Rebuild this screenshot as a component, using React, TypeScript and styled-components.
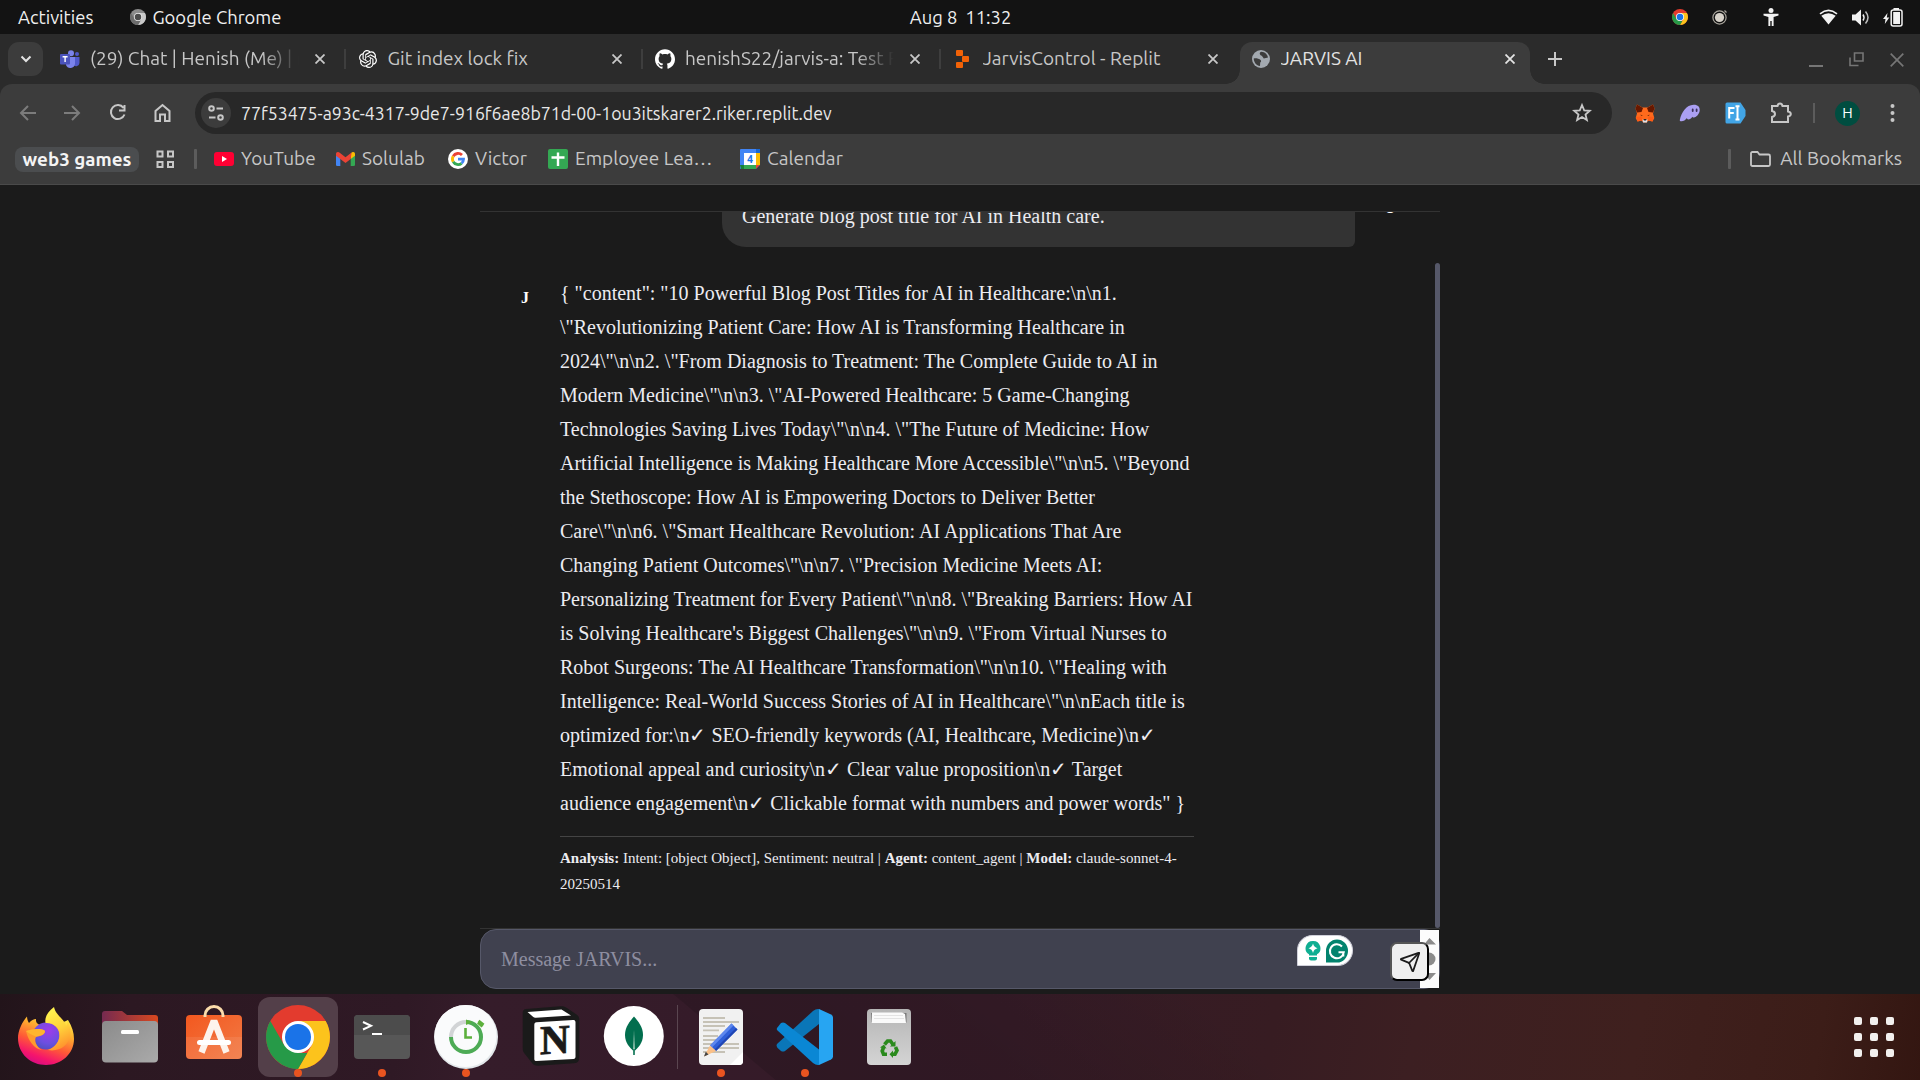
import React from 'react';
import styled, { createGlobalStyle, css } from 'styled-components';
import { SiGithub, SiOpenai } from 'react-icons/si';
import { Send } from 'lucide-react';

const GlobalStyle = createGlobalStyle`
  *, *::before, *::after { box-sizing: border-box; }
  html, body, #root { height: 100%; }
  body { margin: 0; background: #1b1b1b; overflow: hidden; }
`;

const Screen = styled.div`
  display: flex;
  flex-direction: column;
  width: 1920px;
  height: 1080px;
  overflow: hidden;
  font-family: 'Ubuntu', 'Noto Sans', 'Open Sans', sans-serif;
`;

const Label = styled.span<{ $size?: number; $color?: string; $bold?: boolean }>`
  font-size: ${p => p.$size ?? 19}px;
  line-height: 24px;
  color: ${p => p.$color ?? '#c7c7c7'};
  font-weight: ${p => (p.$bold ? 700 : 400)};
  white-space: pre;
`;

/* ---------- system bar ---------- */

const SystemBar = styled.header`
  flex: none;
  display: grid;
  grid-template-columns: 1fr auto 1fr;
  align-items: center;
  height: 34px;
  padding: 0 17px 0 18px;
  background: #131313;
`;

const SystemLabel = styled(Label).attrs({ $size: 18.4, $color: '#f0f0f0' })``;

const SystemLeft = styled.div`
  display: flex;
  align-items: center;
  gap: 37px;
`;

const AppName = styled.div`
  display: flex;
  align-items: center;
  gap: 6px;
`;

const Clock = styled.div`
  display: flex;
  gap: 8px;
`;

const Tray = styled.div`
  display: flex;
  justify-content: flex-end;
  align-items: center;
`;

const TrayItem = styled.div<{ $gap?: number }>`
  display: flex;
  margin-left: ${p => p.$gap ?? 0}px;
`;

/* ---------- tab strip ---------- */

const TabStrip = styled.nav`
  flex: none;
  display: flex;
  align-items: flex-end;
  height: 50px;
  padding-left: 8px;
  background: #2b2b2b;
`;

const TabSearch = styled.button`
  display: grid;
  place-items: center;
  width: 35px;
  height: 34px;
  margin: 0 6px 8px 0;
  padding: 0;
  border: 0;
  border-radius: 11px;
  background: #3c3c3c;
`;

const Tab = styled.div<{ $width: number; $active?: boolean; $divider?: boolean }>`
  position: relative;
  flex: none;
  display: flex;
  align-items: center;
  width: ${p => p.$width}px;
  height: 42px;
  padding: 0 ${p => (p.$active ? 15 : 22)}px 8px 11px;
  border-radius: 12px 12px 0 0;
  ${p =>
    p.$active &&
    css`
      background: #3c3c3c;
      &::before,
      &::after {
        content: '';
        position: absolute;
        bottom: 0;
        width: 14px;
        height: 14px;
      }
      &::before {
        left: -14px;
        background: radial-gradient(circle at 0 0, transparent 13.5px, #3c3c3c 14px);
      }
      &::after {
        right: -14px;
        background: radial-gradient(circle at 100% 0, transparent 13.5px, #3c3c3c 14px);
      }
    `}
  ${p =>
    p.$divider &&
    css`
      &::after {
        content: '';
        position: absolute;
        right: 1px;
        top: 7px;
        width: 2px;
        height: 20px;
        background: #3e3e3e;
      }
    `}
`;

const TabIcon = styled.span`
  flex: none;
  display: grid;
  place-items: center;
  width: 20px;
  height: 20px;
  margin-right: 10px;
`;

const TabTitle = styled.span<{ $fade?: boolean }>`
  flex: 1;
  min-width: 0;
  margin-right: 16px;
  padding-bottom: 2px;
  overflow: hidden;
  white-space: nowrap;
  ${p => p.$fade && css`mask-image: linear-gradient(90deg, #000 82%, transparent 100%);`}
`;

const NewTab = styled.div`
  display: flex;
  margin: 0 0 18px 18px;
`;

const WindowButtons = styled.div`
  display: flex;
  align-items: center;
  gap: 26px;
  margin: 0 16px 17px auto;
`;

/* ---------- toolbar ---------- */

const ChromeBody = styled.div`
  flex: none;
  height: 101px;
  background: #2b2b2b;
`;

const ChromePanel = styled.div`
  height: 101px;
  border-radius: 12px 12px 0 0;
  border-bottom: 1px solid #4a4a4a;
  background: #3c3c3c;
`;

const Toolbar = styled.div`
  display: flex;
  align-items: center;
  height: 58px;
  padding: 0 12px 0 16px;
`;

const NavButtons = styled.div`
  display: flex;
  align-items: center;
  gap: 21px;
  width: 179px;
`;

const Omnibox = styled.div`
  flex: none;
  display: flex;
  align-items: center;
  width: 1417px;
  height: 42px;
  padding: 0 19px 0 6px;
  border-radius: 21px;
  background: #282828;
`;

const SiteInfo = styled.span`
  display: grid;
  place-items: center;
  width: 30px;
  height: 30px;
  margin-right: 10px;
  border-radius: 50%;
  background: #3c3c3c;
`;

const Url = styled.div`
  flex: 1;
  padding-top: 2px;
`;

const Extensions = styled.div`
  display: flex;
  align-items: center;
  gap: 24px;
  margin-left: 23px;
`;

const ToolDivider = styled.span`
  width: 2px;
  height: 20px;
  margin: 0 -4px 0 -5px;
  background: #5c5c5c;
`;

const Avatar = styled.span`
  display: grid;
  place-items: center;
  width: 25px;
  height: 25px;
  margin-right: 6px;
  border-radius: 50%;
  background: #004d40;
`;

/* ---------- bookmarks ---------- */

const Bookmarks = styled.div`
  display: flex;
  align-items: center;
  height: 34px;
  padding: 0 18px 0 15px;
`;

const BookmarkLabel = styled(Label)`
  padding-bottom: 2px;
`;

const Chip = styled.div`
  display: grid;
  place-items: center;
  width: 124px;
  height: 25px;
  margin-right: 17px;
  border-radius: 8px;
  background: #4b4d4f;
`;

const Bookmark = styled.div<{ $width: number }>`
  display: flex;
  align-items: center;
  gap: 7px;
  width: ${p => p.$width}px;
`;

const AllBookmarks = styled.div`
  display: flex;
  align-items: center;
  gap: 9px;
`;

const BarDivider = styled.span<{ $push?: boolean }>`
  width: 3px;
  height: 20px;
  margin-right: ${p => (p.$push ? 19 : 17)}px;
  margin-left: ${p => (p.$push ? 'auto' : '19px')};
  border-radius: 1px;
  background: #5c5c5c;
`;

/* ---------- page ---------- */

const Page = styled.main`
  flex: 1;
  min-height: 0;
  display: flex;
  flex-direction: column;
  width: 960px;
  margin: 0 auto;
  padding: 26px 0 5px;
  color: #ececf1;
  font-family: 'Liberation Serif', 'Times New Roman', serif;
  font-size: 20px;
  line-height: 34px;
`;

const Messages = styled.section`
  position: relative;
  height: 717px;
  overflow: hidden;
  border-top: 1px solid #333;
`;

const Scrollbar = styled.div`
  position: absolute;
  top: 51px;
  right: 0;
  width: 5px;
  height: 665px;
  border-radius: 3px;
  background: #565869;
`;

const Row = styled.article<{ $user?: boolean }>`
  display: flex;
  flex-direction: ${p => (p.$user ? 'row-reverse' : 'row')};
  gap: 17px;
  margin-top: ${p => (p.$user ? -27 : 29)}px;
  padding: 0 ${p => (p.$user ? 32 : 27)}px;
`;

const Initial = styled.div<{ $user?: boolean }>`
  flex: none;
  width: 36px;
  height: 40px;
  padding-top: ${p => (p.$user ? 6 : 4.5)}px;
  color: #fff;
  font-size: 16px;
  font-weight: 700;
  line-height: 34px;
  text-align: center;
`;

const Bubble = styled.div`
  width: 633px;
  padding: 14px 20px;
  border-radius: 24px 24px 6px 24px;
  background: #333;
`;

const Reply = styled.div`
  width: 634px;
`;

const ReplyLine = styled.div`
  height: 34px;
  white-space: nowrap;
`;

const Analysis = styled.div`
  margin-top: 16px;
  padding-top: 9px;
  border-top: 1px solid #444;
  font-size: 15px;
  line-height: 25.5px;
`;

const Composer = styled.form`
  position: relative;
  display: flex;
  height: 61px;
  border-top: 1px solid #333;
`;

const Field = styled.div`
  flex: 1;
  padding: 12px 20px;
  border: 1px solid #565869;
  border-radius: 16px;
  background: #40414f;
  color: #8e8ea0;
`;

const FieldScroll = styled.div`
  position: absolute;
  top: 1px;
  right: 1px;
  width: 19px;
  height: 58px;
  background: #fcfcfc;
`;

const SendButton = styled.button`
  position: absolute;
  right: 11px;
  top: 13px;
  display: grid;
  place-items: center;
  width: 39px;
  height: 39px;
  padding: 0;
  border: 2px solid;
  border-color: #555 #000 #000 #555;
  border-radius: 7px;
  background: #efefef;
`;

const Grammarly = styled.div`
  position: absolute;
  left: 817px;
  top: 6px;
  display: flex;
  align-items: center;
  gap: 5px;
  width: 56px;
  height: 31px;
  padding-left: 7px;
  border: 1px solid #d0d0da;
  border-radius: 16px 16px 16px 1px;
  background: #fff;
`;

/* ---------- dock ---------- */

const DockBar = styled.footer`
  flex: none;
  display: flex;
  height: 86px;
  padding: 0 26px 0 4px;
  background:
    linear-gradient(40deg, transparent 498px, rgba(0, 0, 0, 0.13) 499px, rgba(0, 0, 0, 0.1) 650px, transparent 840px),
    linear-gradient(100deg, #22141a 0, #2c1822 130px, #2f1925 400px, #351c2a 480px, #351b29 700px, #351b27 1000px, #371c22 1260px, #3c1f22 1400px, #3f201e 1620px, #3c1d18 1800px, #321510 1920px);
`;

const DockSlot = styled.div<{ $current?: boolean; $running?: boolean }>`
  position: relative;
  display: grid;
  place-items: center;
  width: 84px;
  height: 86px;
  ${p =>
    p.$current &&
    css`
      &::before {
        content: '';
        position: absolute;
        inset: 3px 2px;
        border-radius: 12px;
        background: #533f49;
      }
      svg { position: relative; }
    `}
  ${p =>
    p.$running &&
    css`
      &::after {
        content: '';
        position: absolute;
        left: 38px;
        bottom: 3px;
        width: 8px;
        height: 8px;
        border-radius: 50%;
        background: #e95420;
      }
    `}
`;

const DockDivider = styled.span`
  width: 1px;
  height: 64px;
  margin: 11px 1px 0;
  background: #5a4650;
`;

const AppGrid = styled.div`
  display: grid;
  grid-template-columns: repeat(3, 8px);
  gap: 8px;
  align-content: center;
  margin-left: auto;
`;

const GridDot = styled.i`
  width: 8px;
  height: 8px;
  border-radius: 2px;
  background: #f2f0ee;
`;

/* ---------- icons ---------- */

const Stroke = styled.svg`
  flex: none;
  display: block;
  fill: none;
  stroke: #c7c7c7;
  stroke-width: 2;
`;

const ChromeLogo = ({ size, gray }: { size: number; gray?: boolean }) => {
  const c = gray ? ['#8b8b8b', '#c9c9c9', '#6d6d6d', '#efefef', '#4c4c4c'] : ['#e33b2e', '#fcc31c', '#269a48', '#fff', '#1a73e8'];
  return (
    <svg width={size} height={size} viewBox="0 0 64 64">
      <circle cx="32" cy="32" r="32" fill={c[0]} />
      <path d="M32 16H59.7A32 32 0 0 1 32 64L45.9 40Z" fill={c[1]} />
      <path d="M4.3 16L18.1 40L32 48H41.2L32 64A32 32 0 0 1 4.3 16Z" fill={c[2]} />
      <circle cx="32" cy="32" r="16" fill={c[3]} />
      <circle cx="32" cy="32" r="13" fill={c[4]} />
    </svg>
  );
};

const RecorderIcon = () => (
  <svg width="16" height="16" viewBox="0 0 16 16" fill="none" stroke="#a9a59c" strokeWidth="1.2">
    <circle cx="7.5" cy="8.5" r="6.6" />
    <circle cx="7.5" cy="8.5" r="4.6" fill="#d6d1c8" stroke="none" />
    <path d="M12.5 1.5l2 2" />
  </svg>
);

const AccessIcon = () => (
  <svg width="16" height="18" viewBox="0 0 16 18" fill="#f2f2f2">
    <circle cx="8" cy="2.6" r="2.5" />
    <path d="M.5 5.8h15v1.6L10.6 9v9H8.7v-5H7.3v5H5.4V9L.5 7.4z" />
  </svg>
);

const WifiIcon = () => (
  <svg width="19" height="16" viewBox="0 0 19 16">
    <path d="M1 4.8Q9.5 -2 18 4.8" fill="none" stroke="#f2f2f2" strokeWidth="1.7" />
    <path d="M2.3 6.8Q9.5 1.5 16.7 6.8L9.5 15.5Z" fill="#f2f2f2" />
  </svg>
);

const VolumeIcon = () => (
  <svg width="18" height="17" viewBox="0 0 18 17" fill="none" stroke="#f2f2f2" strokeWidth="1.5">
    <path d="M0 5.5H3.5L9 .5V16.5L3.5 11.5H0Z" fill="#f2f2f2" stroke="none" />
    <path d="M11 5.5Q13 8.5 11 11.5" />
    <path d="M13.5 2.5Q18.5 8.5 13.5 14.5" stroke="#bbb" />
  </svg>
);

const BatteryIcon = () => (
  <svg width="20" height="19" viewBox="0 0 20 19">
    <path d="M4.5 5L0 11H2.5L1.8 16L6.3 9.5H3.8Z" fill="#f2f2f2" />
    <path d="M10.5 0h5.5v2h-5.5z" fill="#f2f2f2" />
    <rect x="8.2" y="2" width="10.8" height="16" rx="2" fill="none" stroke="#f2f2f2" strokeWidth="1.5" />
    <rect x="10.2" y="4" width="6.8" height="12" fill="#f2f2f2" />
  </svg>
);

const TeamsIcon = () => (
  <svg width="20" height="19" viewBox="0 0 20 19">
    <circle cx="11" cy="3.3" r="3" fill="#7b83eb" />
    <circle cx="17" cy="4" r="2" fill="#5059c9" />
    <path d="M13 7h6.5v6a3.5 3.5 0 0 1-6.5 1.5z" fill="#5059c9" />
    <path d="M6 7h9v7a4.7 4.7 0 0 1-9 1z" fill="#7b83eb" />
    <rect x="0" y="4" width="10" height="10.5" rx="1" fill="#4b53bc" />
    <path d="M2.6 6.8h5M5.1 6.8v5.2" stroke="#fff" strokeWidth="1.4" />
  </svg>
);

const ReplitIcon = () => (
  <svg width="14" height="18" viewBox="0 0 14 18" fill="#f26207">
    <rect x="0" y="0" width="7" height="6" rx="1" />
    <rect x="6" y="6" width="7" height="6" rx="1" />
    <rect x="0" y="12" width="7" height="6" rx="1" />
  </svg>
);

const GlobeIcon = () => (
  <svg width="18" height="18" viewBox="0 0 18 18">
    <circle cx="9" cy="9" r="9" fill="#a3a9b0" />
    <path d="M9.5 1.8C6.8 2.5 7.5 5 9.8 5.8L11.8 8.6L16 7.6C15.6 4.5 12.8 1.9 9.5 1.8ZM1.7 8.5C5 8 6.5 9 8 9.5C9.5 10.3 9.3 12 8.2 12.5L8 16C4.5 15.7 1.9 12.6 1.7 8.5Z" fill="#3c3c3c" />
  </svg>
);

const CloseIcon = ({ size = 10, color = '#c7c7c7', width = 1.8 }: { size?: number; color?: string; width?: number }) => (
  <svg width={size} height={size} viewBox="0 0 10 10" stroke={color} strokeWidth={width}>
    <path d="M.5.5l9 9M9.5.5l-9 9" />
  </svg>
);

const FoxIcon = () => (
  <svg width="20" height="19" viewBox="0 0 20 19">
    <path d="M2 .5L7.500 3.500H12.500L18 .5L19.500 4.500L18 9.500L19.300 14L17.500 17.500L13.500 16.500L11.500 18.500H8.500L6.500 16.500L2.500 17.500L.7 14L2 9.500L.5 4.500Z" fill="#ff6a1c" />
    <path d="M2 .5L8 4L6.500 8L2 8.500L.5 4.500ZM18 .5L12 4L13.500 8L18 8.500L19.500 4.500Z" fill="#661800" />
    <path d="M1 13L6.500 12.500L7 16.500L2.500 17.500ZM19 13L13.500 12.500L13 16.500L17.500 17.500Z" fill="#ff5c16" />
    <path d="M5.500 10.500l2.500 1.200H6zM14.500 10.500l-2.500 1.200h2z" fill="#5a2308" />
    <path d="M7.500 15.500h5L12 18.500H8z" fill="#dfe3ea" />
    <path d="M8.500 15h3l-.4 1.500H8.900z" fill="#34221d" />
  </svg>
);

const GhostIcon = () => (
  <svg width="22" height="18" viewBox="0 0 22 18">
    <path d="M.8 16C2.5 8 7.5 1 14.5 .8C19 .7 21 3 20.7 6.5C20.4 10 17.5 13 15 13.5C14 13.7 13.5 13 13.3 12.7C12.3 14.5 10.8 15.5 9.5 15.5C8.3 15.5 8 14.5 8 14C6.5 16 4.5 17.3 2.5 17.3C1.2 17.3.6 16.8.8 16Z" fill="#ab9ff2" />
    <path d="M13.7 5.5v1.6M17.6 5.5v1.6" stroke="#3c315b" strokeWidth="1.8" strokeLinecap="round" />
  </svg>
);

const FontExtIcon = () => (
  <svg width="21" height="22" viewBox="0 0 21 22">
    <path d="M2 .5H15.5L20.5 8V14L15.5 21.5H2A1.5 1.5 0 0 1 .5 20V2A1.5 1.5 0 0 1 2 .5Z" fill="#42a5e6" />
    <path d="M4.2 16.5V6H9.5M4.2 11H8.8M12.5 4.5V17.5M10.5 4.2H14.5M10.5 17.5H14.5" fill="none" stroke="#fff" strokeWidth="2" />
  </svg>
);

const GmailIcon = () => (
  <svg width="19" height="14" viewBox="0 0 19 14">
    <path d="M0 2V12.7A1.3 1.3 0 0 0 1.3 14H4.3V5.5Z" fill="#4285f4" />
    <path d="M19 2V12.7A1.3 1.3 0 0 1 17.7 14H14.7V5.5Z" fill="#34a853" />
    <path d="M14.7 2V7L19 3.7V2C19 0 16.8-.6 15.6.6Z" fill="#fbbc04" />
    <path d="M0 2C0 0 2.2-.6 3.4.6L9.5 5.2L15.6.6L14.7 7L9.5 10.9L4.3 7L0 3.7Z" fill="#ea4335" />
  </svg>
);

const GoogleIcon = () => (
  <svg width="20" height="20" viewBox="0 0 20 20" fill="none" strokeWidth="2.8">
    <circle cx="10" cy="10" r="10" fill="#fff" />
    <path d="M5.2 7.2A5.6 5.6 0 0 1 14 6.1" stroke="#ea4335" />
    <path d="M5.2 12.8A5.6 5.6 0 0 1 5.2 7.2" stroke="#fbbc04" />
    <path d="M13.6 14.3A5.6 5.6 0 0 1 5.2 12.8" stroke="#34a853" />
    <path d="M10 10.2H15.5A5.6 5.6 0 0 1 13.6 14.3" stroke="#4285f4" />
  </svg>
);

const CalendarIcon = () => (
  <svg width="20" height="20" viewBox="0 0 20 20">
    <rect width="20" height="20" rx="1" fill="#4285f4" />
    <path d="M16 4h4v12h-4z" fill="#fbbc04" />
    <path d="M4 16h12v4H4z" fill="#34a853" />
    <path d="M0 16h4v4H1z" fill="#188038" />
    <path d="M16 0h4v4h-4z" fill="#1967d2" />
    <path d="M16 16h4l-4 4z" fill="#ea4335" />
    <path d="M20 16v4h-4z" fill="#3c3c3c" />
    <rect x="4" y="4" width="12" height="12" fill="#fff" />
    <text x="10" y="14" fontSize="10.5" fontWeight="700" fontFamily="Roboto, sans-serif" textAnchor="middle" fill="#1a73e8">4</text>
  </svg>
);

const BulbMark = () => (
  <svg width="16" height="22" viewBox="0 0 16 22">
    <path d="M8 1A7.2 7.2 0 0 1 12 14.3V15.5H4V14.3A7.2 7.2 0 0 1 8 1Z" fill="#0fae92" />
    <path d="M4 17h8v1.5a2 2 0 0 1-2 2H6a2 2 0 0 1-2-2z" fill="#0fae92" />
    <path d="M8 3.5Q8.9 7.3 12.5 8.2Q8.9 9.1 8 12.9Q7.1 9.1 3.5 8.2Q7.1 7.3 8 3.5Z" fill="#fff" />
  </svg>
);

const GrammarlyMark = () => (
  <svg width="22" height="24" viewBox="0 0 22 24">
    <path d="M11 .5A11 11.500 0 1 1 11 23.500H0V12A11 11.500 0 0 1 11 .5Z" fill="#02836e" />
    <path d="M16 7.500A7 7 0 1 0 17.800 13.200H12.500M17.300 12.500V17.500" fill="none" stroke="#fff" strokeWidth="2" />
  </svg>
);

const Art = styled.svg.attrs({ viewBox: '0 0 64 64' })`
  width: 64px;
  height: 64px;
  overflow: visible;
`;

const Firefox = () => (
  <Art>
    <defs>
      <linearGradient id="ffBody" x1="0.8" y1="0" x2="0.35" y2="1">
        <stop offset="0" stopColor="#fff44f" />
        <stop offset=".3" stopColor="#ffb02e" />
        <stop offset=".6" stopColor="#ff5a36" />
        <stop offset=".85" stopColor="#f5156c" />
        <stop offset="1" stopColor="#d80c82" />
      </linearGradient>
      <radialGradient id="ffGlobe" cx=".6" cy=".3" r=".8">
        <stop offset="0" stopColor="#a03bea" />
        <stop offset=".6" stopColor="#6b4fe0" />
        <stop offset="1" stopColor="#4a4fb8" />
      </radialGradient>
      <linearGradient id="ffFlame" x1=".4" y1="0" x2=".7" y2="1">
        <stop offset="0" stopColor="#fff44f" />
        <stop offset=".5" stopColor="#ffd23a" />
        <stop offset="1" stopColor="#ff8a2c" />
      </linearGradient>
    </defs>
    <path d="M13 11.5C13 14 14 16.5 15 18C17 15.5 20 14 22 14C21.5 17 23 19 26 20C34 15 46 20 54 15C58 21 60 28 60 34C60 49 47 60 32 60C17 60 4 49 4 33C4 26 8 17 13 11.5Z" fill="url(#ffBody)" />
    <circle cx="32" cy="31" r="13.5" fill="url(#ffGlobe)" />
    <path d="M40 2C33 7 30.500 13 31.500 18C39 17.500 45 22 45.500 28C46 35 42 42 34 45C45 47 54 41 56 31C57.500 24 55 18 53 15C54 18 53 20 52 21C50 13 42 11 40 2Z" fill="url(#ffFlame)" />
    <path d="M12 26C18 24 28 23 31 26C31 30 26 31 22 32C20 35 22 42 28 45C20 44 14 35 12 26Z" fill="#ff9a2e" />
    <path d="M12 26C18 24 28 23 31 26C31 29.5 26 31 22 31.5C18 30 14 28 12 26Z" fill="#ffb52f" />
  </Art>
);

const Files = () => (
  <Art>
    <defs>
      <linearGradient id="flBack"><stop stopColor="#752a50" /><stop offset="1" stopColor="#d9481f" /></linearGradient>
      <linearGradient id="flFront" x2="1" y2="1"><stop stopColor="#8b8b8b" /><stop offset="1" stopColor="#aaa" /></linearGradient>
    </defs>
    <path d="M4 9a3 3 0 0 1 3-3H24L29 10H57a3 3 0 0 1 3 3V30H4Z" fill="url(#flBack)" />
    <rect x="4" y="16" width="56" height="41.5" rx="4" fill="url(#flFront)" />
    <rect x="23" y="25" width="18" height="4" rx="1.5" fill="#fff" />
  </Art>
);

const Software = () => (
  <Art>
    <defs><linearGradient id="swBag" x2="1" y2="1"><stop stopColor="#f3581f" /><stop offset="1" stopColor="#f17a45" /></linearGradient></defs>
    <rect x="4" y="10" width="56" height="44" rx="4" fill="url(#swBag)" />
    <path d="M4 32h56v18a4 4 0 0 1-4 4H8a4 4 0 0 1-4-4z" fill="#fff" opacity=".08" />
    <path d="M23 12V10.5A9 9 0 0 1 41 10.5V12" fill="none" stroke="#fbdcab" strokeWidth="3" />
    <path d="M19.5 47.5L31 18H33L44.5 47.5" fill="none" stroke="#fdf3ec" strokeWidth="6.5" />
    <rect x="15" y="35" width="34" height="5" rx="2.5" fill="#fff" />
  </Art>
);

const Terminal = () => (
  <Art>
    <rect x="4" y="10" width="56" height="44" rx="4" fill="#575757" />
    <path d="M4 30V14a4 4 0 0 1 4-4H56a4 4 0 0 1 4 4V30Z" fill="#4c4c4c" />
    <path d="M13 17L21 20.8L13 24.5M22 29H32" fill="none" stroke="#fff" strokeWidth="2" />
  </Art>
);

const Timer = () => (
  <Art>
    <circle cx="32" cy="32" r="32" fill="#e3e8eb" />
    <circle cx="31.5" cy="31" r="31" fill="#fafbfc" />
    <path d="M32 17A15 15 0 0 0 17 32" fill="none" stroke="#d2d4d6" strokeWidth="4" />
    <path d="M17 32A15 15 0 1 0 32 17" fill="none" stroke="#4dab55" strokeWidth="4" />
    <path d="M32 14.5L38 17L32 20Z" fill="#5cb03c" />
    <path d="M44 17.5L48.5 21.5M44.5 16L49.5 20" stroke="#5cb03c" strokeWidth="3" />
    <path d="M31.5 23V32.5H38" fill="none" stroke="#5cb03c" strokeWidth="2.6" />
  </Art>
);

const Notion = () => (
  <Art>
    <path d="M8 4L42 1.2C45 1 47 1.5 49 3L58.5 9.5C60.5 11 61.3 12 61.3 14.5V52C61.3 56 60 58 56 58.3L20 60.7C17 60.8 15.5 60 14 58L6.5 48.5C5 46.5 4.7 45.5 4.7 43V8C4.7 5.5 5.8 4.2 8 4Z" fill="#1a1a1a" />
    <path d="M9.5 7L43.5 4.5L53 10.5L18 12.8C16.5 12.8 16 12.5 15 11.7Z" fill="#fff" />
    <path d="M18.5 17.3L55 15C56.5 15 57.5 15.6 57.5 17.3V51.5C57.5 53 56.8 53.8 55.5 53.9L18.5 56C17 56 16.3 55.4 16.3 54V20C16.3 18.3 17 17.4 18.5 17.3Z" fill="#fff" />
    <text x="36.8" y="49.5" fontSize="41" fontWeight="700" fontFamily="'Liberation Serif', serif" textAnchor="middle" stroke="#1a1a1a" strokeWidth=".8" transform="skewY(-3) translate(0 1)" fill="#1a1a1a">N</text>
  </Art>
);

const Mongo = () => (
  <Art>
    <circle cx="31.8" cy="31" r="30" fill="#fff" />
    <path d="M32 11.5C36 16 41 22 41 30C41 38 36 43 32 46.5C28 43 23 38 23 30C23 22 28 16 32 11.5Z" fill="#026e4e" />
    <path d="M32 25L33 44L32.5 50H31.5L31 44Z" fill="#8fc0ac" />
    <path d="M31.3 44h1.4v6h-1.4z" fill="#026e4e" />
  </Art>
);

const TextEditor = () => (
  <Art>
    <rect x="10" y="4" width="44" height="56" rx="4" fill="#f1f1f1" />
    <path d="M54 47V56a4 4 0 0 1-4 4H41Z" fill="#fff" />
    <path d="M14 13H36M14 17H50M14 21H36M14 25.3H30M14 31H29M14 35H30M14 39H50M14 43H50M14 47H36" stroke="#c6c2b6" strokeWidth="1.8" />
    <path d="M21 40.5L42.5 18.5L48.5 24.5L27 46Z" fill="#2f5fd8" />
    <path d="M21 40.5L42.5 18.5L44.5 20.5L23 42.5Z" fill="#5d87ee" />
    <path d="M25.5 44.5L47 23L48.5 24.5L27 46Z" fill="#2046b4" />
    <path d="M21 40.5L27 46L15 51.5Z" fill="#fbc088" />
    <path d="M16.8 46.8L19.5 49.4L15 51.5Z" fill="#444" />
  </Art>
);

const VsCode = () => (
  <Art>
    <path d="M4 39L40 6Q43 3.5 46 4V19L12 46Q10 47.2 8 46L4.6 43Q3 41 4 39Z" fill="#0a76b8" />
    <path d="M4 23L8 18Q10 17 12 18L46 44.5V60Q43 60.5 40 58L4 25Q3.5 24 4 23Z" fill="#0a87d4" />
    <path d="M46 4L58 9.5Q60 10.5 60 12.5V51.5Q60 53.5 58 54.5L46 60Z" fill="#27a5f2" />
  </Art>
);

const Trash = () => (
  <Art>
    <defs><linearGradient id="trBody" x2="0" y2="1"><stop stopColor="#b5b5b5" /><stop offset="1" stopColor="#d4d4d4" /></linearGradient></defs>
    <rect x="10" y="4" width="44" height="56" rx="4" fill="url(#trBody)" />
    <path d="M14 8H49.5V17.5H14Z" fill="#777" />
    <path d="M15 7.5H45L48 9L49 18H14.5Z" fill="#fafafa" />
    <path d="M17 10.5H46M17 13.5H47" stroke="#ddd" strokeWidth=".8" />
    <g fill="none" stroke="#2a8a1d" strokeWidth="3.6">
      <path d="M27.5 39.5L30.5 36H33.5L36 39.5" />
      <path d="M38.5 42L40 45.5L38 49.2H35" />
      <path d="M30 49.2H26.5L25.2 46L26.5 42.5" />
    </g>
    <path d="M38.5 36V41.5H33ZM36 45.5V53L32.5 49.3ZM23 42.5L27 39.5L29.5 43.5Z" fill="#2a8a1d" />
  </Art>
);

/* ---------- data ---------- */

const tabs = [
  { title: '(29) Chat | Henish (Me) | M', width: 297.5, icon: <TeamsIcon />, fade: true, divider: true },
  { title: 'Git index lock fix', width: 297.5, icon: <SiOpenai size={18} color="#fff" />, divider: true },
  { title: 'henishS22/jarvis-a: Test F', width: 297.5, icon: <SiGithub size={20} color="#fff" />, fade: true, divider: true },
  { title: 'JarvisControl - Replit', width: 298, icon: <ReplitIcon /> },
  { title: 'JARVIS AI', width: 290.5, icon: <GlobeIcon />, active: true },
];

const replyLines = [
  '{ "content": "10 Powerful Blog Post Titles for AI in Healthcare:\\n\\n1.',
  '\\"Revolutionizing Patient Care: How AI is Transforming Healthcare in',
  '2024\\"\\n\\n2. \\"From Diagnosis to Treatment: The Complete Guide to AI in',
  'Modern Medicine\\"\\n\\n3. \\"AI-Powered Healthcare: 5 Game-Changing',
  'Technologies Saving Lives Today\\"\\n\\n4. \\"The Future of Medicine: How',
  'Artificial Intelligence is Making Healthcare More Accessible\\"\\n\\n5. \\"Beyond',
  'the Stethoscope: How AI is Empowering Doctors to Deliver Better',
  'Care\\"\\n\\n6. \\"Smart Healthcare Revolution: AI Applications That Are',
  'Changing Patient Outcomes\\"\\n\\n7. \\"Precision Medicine Meets AI:',
  'Personalizing Treatment for Every Patient\\"\\n\\n8. \\"Breaking Barriers: How AI',
  "is Solving Healthcare's Biggest Challenges\\\"\\n\\n9. \\\"From Virtual Nurses to",
  'Robot Surgeons: The AI Healthcare Transformation\\"\\n\\n10. \\"Healing with',
  'Intelligence: Real-World Success Stories of AI in Healthcare\\"\\n\\nEach title is',
  'optimized for:\\n✓ SEO-friendly keywords (AI, Healthcare, Medicine)\\n✓',
  'Emotional appeal and curiosity\\n✓ Clear value proposition\\n✓ Target',
  'audience engagement\\n✓ Clickable format with numbers and power words" }',
];

export default function App() {
  return (
    <Screen>
      <GlobalStyle />
      <SystemBar>
        <SystemLeft>
          <SystemLabel>Activities</SystemLabel>
          <AppName>
            <ChromeLogo size={16} gray />
            <SystemLabel>Google Chrome</SystemLabel>
          </AppName>
        </SystemLeft>
        <Clock>
          <SystemLabel>Aug 8</SystemLabel>
          <SystemLabel>11:32</SystemLabel>
        </Clock>
        <Tray>
          <TrayItem><ChromeLogo size={16} /></TrayItem>
          <TrayItem $gap={24}><RecorderIcon /></TrayItem>
          <TrayItem $gap={35}><AccessIcon /></TrayItem>
          <TrayItem $gap={40}><WifiIcon /></TrayItem>
          <TrayItem $gap={14}><VolumeIcon /></TrayItem>
          <TrayItem $gap={13}><BatteryIcon /></TrayItem>
        </Tray>
      </SystemBar>

      <TabStrip>
        <TabSearch>
          <Stroke width="12" height="8" viewBox="0 0 12 8"><path d="M1.5 1.5L6 6L10.5 1.5" stroke="#e3e3e3" /></Stroke>
        </TabSearch>
        {tabs.map(t => (
          <Tab key={t.title} $width={t.width} $active={t.active} $divider={t.divider}>
            <TabIcon>{t.icon}</TabIcon>
            <TabTitle $fade={t.fade}>
              <Label $color={t.active ? '#e3e3e3' : '#c7c7c7'}>{t.title}</Label>
            </TabTitle>
            <CloseIcon color={t.active ? '#e3e3e3' : '#c7c7c7'} />
          </Tab>
        ))}
        <NewTab><Stroke width="14" height="14" viewBox="0 0 14 14"><path d="M7 0V14M0 7H14" /></Stroke></NewTab>
        <WindowButtons>
          <Stroke width="14" height="14" viewBox="0 0 14 14"><path d="M0 13H14" stroke="#767676" /></Stroke>
          <Stroke width="15" height="15" viewBox="0 0 15 15"><path d="M5.5 1H14V9H5.5ZM1 5.5V13.5H9.5" stroke="#767676" strokeWidth="1.6" /></Stroke>
          <CloseIcon size={14} color="#767676" width={1.2} />
        </WindowButtons>
      </TabStrip>

      <ChromeBody>
        <ChromePanel>
          <Toolbar>
            <NavButtons>
              <Stroke width="24" height="20" viewBox="-2 0 24 20"><path d="M18 10H3.5M10 3L3 10L10 17" stroke="#7c7c7c" /></Stroke>
              <Stroke width="24" height="20" viewBox="1 0 24 20"><path d="M4 10H18.5M12 3L19 10L12 17" stroke="#7c7c7c" /></Stroke>
              <Stroke width="24" height="20" viewBox="-1 0 24 20"><path d="M16.5 4.8A7 7 0 1 0 17.5 11.5M17.5 2V7.5H12" /></Stroke>
              <Stroke width="24" height="20" viewBox="-.5 0 24 20"><path d="M4 18V8L11 2L18 8V18H13.5V11.5H8.5V18Z" /></Stroke>
            </NavButtons>
            <Omnibox>
              <SiteInfo>
                <Stroke width="16" height="16" viewBox="0 0 16 16"><path d="M8.5 3.5H15M1 12.5H7.5" /><circle cx="3.5" cy="3.5" r="2.3" /><circle cx="12.5" cy="12.5" r="2.3" /></Stroke>
              </SiteInfo>
              <Url><Label $size={17.7} $color="#e8e8e8">77f53475-a93c-4317-9de7-916f6ae8b71d-00-1ou3itskarer2.riker.replit.dev</Label></Url>
              <Stroke width="22" height="22" viewBox="0 0 22 22"><path d="M11 3L13.2 8.3L18.8 8.8L14.5 12.5L15.9 18L11 15.1L6.1 18L7.5 12.5L3.2 8.8L8.8 8.3Z" strokeWidth="1.8" /></Stroke>
            </Omnibox>
            <Extensions>
              <FoxIcon />
              <GhostIcon />
              <FontExtIcon />
              <Stroke width="24" height="22" viewBox="1 0 24 22"><path d="M3 4H8.5Q9 1.5 11 1.5Q13 1.5 13.5 4H19V9.5Q21.8 10 21.8 12Q21.8 14 19 14.5V20H3V15Q6 14.3 6 12Q6 9.5 3 9Z" /></Stroke>
              <ToolDivider />
              <Avatar><Label $size={15} $color="#fff">H</Label></Avatar>
              <svg width="5" height="20" viewBox="0 0 5 20" fill="#c7c7c7"><circle cx="2.5" cy="3" r="2" /><circle cx="2.5" cy="10" r="2" /><circle cx="2.5" cy="17" r="2" /></svg>
            </Extensions>
          </Toolbar>
          <Bookmarks>
            <Chip><BookmarkLabel $bold $size={18.8} $color="#f4f4f4">web3 games</BookmarkLabel></Chip>
            <Stroke width="19" height="19" viewBox="0 0 19 19"><path d="M1.5 1.5H6.5V6.5H1.5ZM12 1.5H17V6.5H12ZM1.5 12H6.5V17H1.5ZM12 12H17V17H12Z" /></Stroke>
            <BarDivider />
            <Bookmark $width={122}>
              <svg width="20" height="14" viewBox="0 0 20 14"><rect width="20" height="14" rx="3" fill="#f03" /><path d="M8 4L13 7L8 10Z" fill="#fff" /></svg>
              <BookmarkLabel>YouTube</BookmarkLabel>
            </Bookmark>
            <Bookmark $width={112}><GmailIcon /><BookmarkLabel>Solulab</BookmarkLabel></Bookmark>
            <Bookmark $width={100}><GoogleIcon /><BookmarkLabel>Victor</BookmarkLabel></Bookmark>
            <Bookmark $width={192}>
              <svg width="20" height="20" viewBox="0 0 20 20"><rect width="20" height="20" rx="2" fill="#34a853" /><path d="M10 3.5V17M3.5 8.5H16.5" stroke="#fff" strokeWidth="2.4" /></svg>
              <BookmarkLabel>Employee Lea…</BookmarkLabel>
            </Bookmark>
            <Bookmark $width={110}><CalendarIcon /><BookmarkLabel>Calendar</BookmarkLabel></Bookmark>
            <BarDivider $push />
            <AllBookmarks>
              <Stroke width="21" height="16" viewBox="0 0 21 16"><path d="M1 2.5Q1 1 2.5 1H7.5L9.5 3.5H18.5Q20 3.5 20 5V13.5Q20 15 18.5 15H2.5Q1 15 1 13.5Z" strokeWidth="1.8" /></Stroke>
              <BookmarkLabel>All Bookmarks</BookmarkLabel>
            </AllBookmarks>
          </Bookmarks>
        </ChromePanel>
      </ChromeBody>

      <Page>
        <Messages>
          <Row $user>
            <Initial $user>U</Initial>
            <Bubble>Generate blog post title for AI in Health care.</Bubble>
          </Row>
          <Row>
            <Initial>J</Initial>
            <Reply>
              {replyLines.map(line => <ReplyLine key={line}>{line}</ReplyLine>)}
              <Analysis>
                <b>Analysis:</b> Intent: [object Object], Sentiment: neutral | <b>Agent:</b> content_agent | <b>Model:</b> claude-sonnet-4-20250514
              </Analysis>
            </Reply>
          </Row>
          <Scrollbar />
        </Messages>
        <Composer>
          <Field>Message JARVIS...</Field>
          <FieldScroll>
            <svg width="19" height="58" viewBox="0 0 19 58" fill="#8b8b8b"><path d="M4 14.5L9.5 8L16 14.5ZM4 43H16L9.5 50Z" /><circle cx="9" cy="29" r="6.5" /></svg>
          </FieldScroll>
          <SendButton type="button"><Send size={22} color="#1b1b1b" strokeWidth={1.9} /></SendButton>
          <Grammarly><BulbMark /><GrammarlyMark /></Grammarly>
        </Composer>
      </Page>

      <DockBar>
        <DockSlot><Firefox /></DockSlot>
        <DockSlot><Files /></DockSlot>
        <DockSlot><Software /></DockSlot>
        <DockSlot $current $running><ChromeLogo size={64} /></DockSlot>
        <DockSlot $running><Terminal /></DockSlot>
        <DockSlot $running><Timer /></DockSlot>
        <DockSlot><Notion /></DockSlot>
        <DockSlot><Mongo /></DockSlot>
        <DockDivider />
        <DockSlot $running><TextEditor /></DockSlot>
        <DockSlot $running><VsCode /></DockSlot>
        <DockSlot><Trash /></DockSlot>
        <AppGrid>{Array.from({ length: 9 }, (_, i) => <GridDot key={i} />)}</AppGrid>
      </DockBar>
    </Screen>
  );
}
